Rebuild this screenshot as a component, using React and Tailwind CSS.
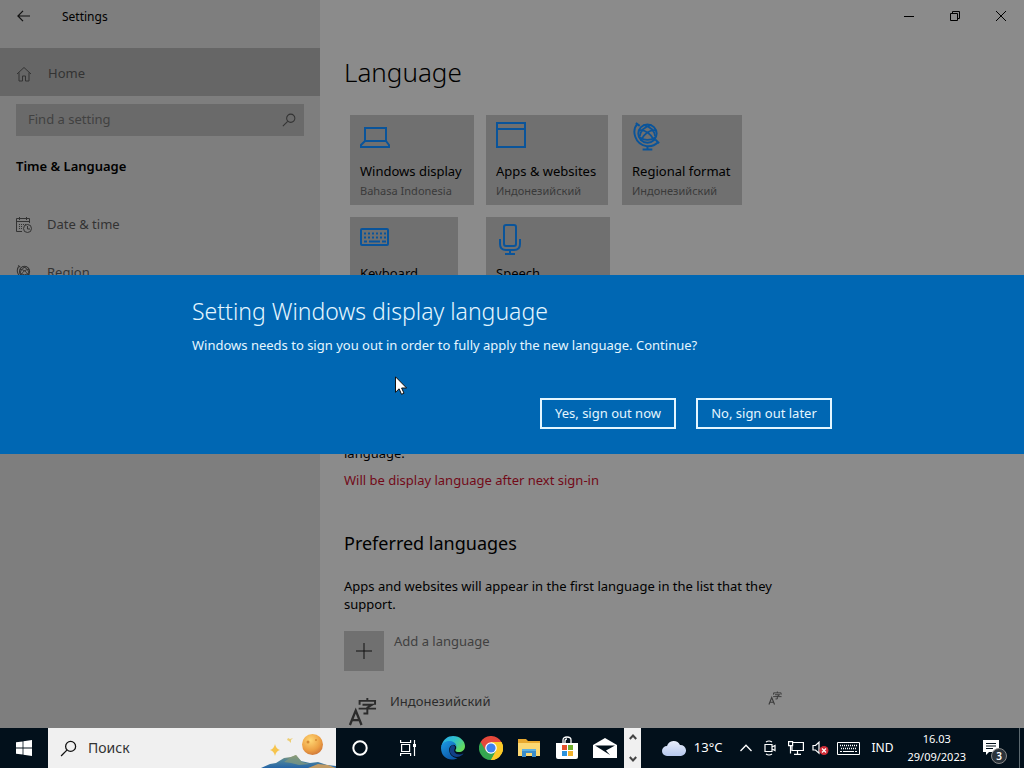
import { useState } from 'react';

const LaptopIcon = () => (
  <svg width="32" height="30" viewBox="0 0 32 30" fill="none" stroke="#0a549a" strokeWidth="2">
    <path d="M5 6h21v13H5z" />
    <path d="M5 19l-4 4v2h28v-2l-3-4z" />
  </svg>
);

const WindowIcon = () => (
  <svg width="32" height="30" viewBox="0 0 32 30" fill="none" stroke="#0a549a" strokeWidth="2">
    <path d="M1 1h28v24H1zM1 7h28" />
  </svg>
);

const GlobeIcon = ({ size = 29, color = '#0a549a', weight = 2 }) => (
  <svg width={size} height={size} viewBox="0 0 30 30" fill="none" stroke={color} strokeWidth={weight}>
    <circle cx="16" cy="12" r="9.5" />
    <path d="M7.500 8.500Q17 8 23 19M24.500 8.500Q15 8 9 19M12 3q11 3 12 12M20 3Q9 6 8 15M8 16q8 5 16 0" strokeWidth={weight * 0.9} />
    <path d="M6 1.500C-1 9 3 23 15 25c5 .6 9-1 12-4M4 1l4 3M24 18l4 4M16 25v3M11 28.500h10" />
  </svg>
);

const KeyboardIcon = () => (
  <svg width="32" height="30" viewBox="0 0 32 30" fill="none" stroke="#0a549a" strokeWidth="2">
    <rect x="1" y="5" width="27" height="16" rx="1" />
    <path d="M4 9.500h22M4 13.500h22" strokeDasharray="2 2" />
    <path d="M4 17.500h3M9 17.500h11M22 17.500h4" />
  </svg>
);

const MicIcon = () => (
  <svg width="32" height="32" viewBox="0 0 32 32" fill="none" stroke="#0a549a" strokeWidth="2">
    <rect x="8" y="1" width="12" height="21" rx="2" />
    <path d="M4 15v5q0 6 6 6h8q6 0 6-6v-5M14 26v4M9 30h10" />
  </svg>
);

const CalendarIcon = () => (
  <svg width="16" height="16" viewBox="0 0 16 16" fill="none" stroke="#333" strokeWidth="1">
    <path d="M6 14.500H.5v-13h13V6M.5 4.500h13M3.500 0v3M10.500 0v3" />
    <path d="M3 7.500h7M3 9.500h4M3 11.500h3" strokeDasharray="1 1" />
    <circle cx="11.500" cy="11.500" r="4" />
    <path d="M11.500 9v3H14" />
  </svg>
);

const HomeIcon = () => (
  <svg width="16" height="16" viewBox="0 0 16 16" fill="none" stroke="#333" strokeWidth="1">
    <path d="M1 8l7-6.500L15 8M3 6.500V15h3.500v-5h3v5H13V6.500" />
  </svg>
);

const SearchIcon = ({ size = 16, color = '#333' }) => (
  <svg width={size} height={size} viewBox="0 0 16 16" fill="none" stroke={color} strokeWidth="1.200">
    <circle cx="10" cy="6" r="4.700" />
    <path d="M6.500 9.500L1 15" />
  </svg>
);

const LanguageGlyph = ({ size, color = '#2b2b2b' }) => (
  <svg width={size} height={size} viewBox="0 0 28 30" fill="none" stroke={color} strokeWidth="2.400">
    <path d="M1 29L7 14l6 15M3 24h8" />
    <path d="M19 1v3M11 8V4h16v4M14 8h10l-5 3v6h-4M10 12h18" strokeWidth="2" />
  </svg>
);

const EdgeIcon = () => (
  <svg width="24" height="24" viewBox="0 0 24 24">
    <defs>
      <linearGradient id="edgeTop" x1="0" y1="0" x2="1" y2="0.600">
        <stop offset="0" stopColor="#28a9e8" />
        <stop offset="0.500" stopColor="#2fc0cf" />
        <stop offset="1" stopColor="#65dc5c" />
      </linearGradient>
      <linearGradient id="edgeBody" x1="0" y1="0" x2="0.600" y2="1">
        <stop offset="0" stopColor="#1c9be5" />
        <stop offset="1" stopColor="#0c58a8" />
      </linearGradient>
    </defs>
    <path d="M.5 10C2 3 7 0 12 0c7 0 12 5 12 10 0 4-3 6-6 6-4 0-4-1.500-3-3 1-2-.5-5-4-5-5 0-9 1-10.500 2z" fill="url(#edgeTop)" />
    <path d="M.2 10C1.500 6.500 5 5 8.500 5c4 0 7 2.500 7 6-1-2-2.500-2.500-4-2-3 1-4 4-3 7 1 4 5 6 8 6-7 4-16.500 0-16.500-10z" fill="url(#edgeBody)" />
    <path d="M11.500 9c-6 4-2 14 7 11.500 2-.6 3.500-2 4-3.200-3 2-7.500 1.500-9-1.300-1-2 .5-3 .5-4.500 0-1.500-1-2.500-2.500-2.500z" fill="#123f86" />
  </svg>
);

const ChromeIcon = () => (
  <svg width="24" height="24" viewBox="0 0 24 24">
    <path d="M12 12L1.600 6A12 12 0 0 1 22.400 6z" fill="#e5483b" />
    <path d="M12 12L22.400 6A12 12 0 0 1 12 24z" fill="#fbc928" />
    <path d="M12 12v12A12 12 0 0 1 1.600 6z" fill="#35a650" />
    <path d="M12 6h10.400L17 15z" fill="#fbc928" />
    <path d="M1.600 6L7 15l5-9z" fill="#e5483b" />
    <path d="M7 15l5 9 5-9z" fill="#35a650" />
    <path d="M17 15l-5 9A12 12 0 0 0 22.400 6H12z" fill="#fbc928" />
    <circle cx="12" cy="12" r="5.800" fill="#fff" />
    <circle cx="12" cy="12" r="4.600" fill="#3f82ee" />
  </svg>
);

const FolderIcon = () => (
  <svg width="22" height="20" viewBox="0 0 22 20">
    <path d="M0 1h8l2 2h12v15H0z" fill="#e8a92f" />
    <path d="M0 5h22v13H0z" fill="#fbd873" />
    <path d="M4 11h14v8h-4v-4H8v4H4z" fill="#3b8dc9" />
    <path d="M4 11h14v2H4z" fill="#5cb0e2" />
  </svg>
);

const StoreIcon = () => (
  <svg width="24" height="24" viewBox="0 0 24 24">
    <path d="M8 8V4q0-3 4-3t4 3v4M10 8V5q0-2 2-2" fill="none" stroke="#fff" strokeWidth="1.300" />
    <path d="M1 7h22v14q0 2-2 2H3q-2 0-2-2z" fill="#fff" />
    <path d="M7 9h5v5H7z" fill="#e2502b" />
    <path d="M13 9h5v5h-5z" fill="#6fae2b" />
    <path d="M7 15h5v5H7z" fill="#2b92dd" />
    <path d="M13 15h5v5h-5z" fill="#f2b22c" />
  </svg>
);

const MailIcon = () => (
  <svg width="24" height="20" viewBox="0 0 24 20">
    <path d="M0 7l12-7 12 7v13H0z" fill="#fff" />
    <path d="M2 7.500h20l-9 5 4 4.500z" fill="#02101b" />
  </svg>
);

const PINNED = [
  { name: 'Edge', Icon: EdgeIcon },
  { name: 'Chrome', Icon: ChromeIcon },
  { name: 'File Explorer', Icon: FolderIcon },
  { name: 'Store', Icon: StoreIcon },
  { name: 'Mail', Icon: MailIcon },
];

const TILES = [
  { name: 'Windows display', value: 'Bahasa Indonesia', Icon: LaptopIcon, width: 'w-31' },
  { name: 'Apps & websites', value: 'Индонезийский', Icon: WindowIcon, width: 'w-[122px]' },
  { name: 'Regional format', value: 'Индонезийский', Icon: GlobeIcon, width: 'w-30' },
  { name: 'Keyboard', value: '', Icon: KeyboardIcon, width: 'w-27' },
  { name: 'Speech', value: '', Icon: MicIcon, width: 'w-31' },
];

function Sidebar() {
  const [query, setQuery] = useState('');

  return (
    <aside className="flex w-80 shrink-0 flex-col bg-[#7e7e7e]">
      <div className="flex h-12 items-start">
        <button type="button" aria-label="Back" className="flex h-8 w-12 items-center justify-center">
          <svg width="14" height="12" viewBox="0 0 14 12" fill="none" stroke="#111" strokeWidth="1.200">
            <path d="M13 6H1M6 .8L.9 6 6 11.200" />
          </svg>
        </button>
        <span className="px-3.5 text-xs leading-[34px] text-black">Settings</span>
      </div>
      <a href="#home" className="flex h-12 items-center gap-4 bg-[#666] px-4 pt-1 text-[13px] text-[#333]">
        <HomeIcon />Home
      </a>
      <div className="mx-4 mt-2 flex h-8 items-center bg-[#6a6a6a] pr-2 pl-3">
        <input
          type="text"
          aria-label="Find a setting"
          placeholder="Find a setting"
          value={query}
          onChange={(e) => setQuery(e.target.value)}
          className="min-w-0 flex-1 text-[13px] text-black outline-none placeholder:text-[#414141]"
        />
        <SearchIcon size={14} />
      </div>
      <h2 className="px-4 pt-5 text-[13px] leading-5 font-semibold text-black">Time &amp; Language</h2>
      <nav className="mt-[25px] flex flex-col text-[13px] text-[#333]">
        <a href="#date" className="flex h-12 items-center gap-[15px] px-4"><CalendarIcon />Date &amp; time</a>
        <a href="#region" className="flex h-12 items-center gap-[15px] px-4">
          <GlobeIcon size={16} color="#333" />Region
        </a>
      </nav>
    </aside>
  );
}

function WindowControls() {
  return (
    <div className="flex h-8 justify-end text-black">
      <button type="button" aria-label="Minimize" className="flex w-[46px] items-center justify-center">
        <svg width="10" height="10" viewBox="0 0 10 10" stroke="#000"><path d="M0 5.500h10" /></svg>
      </button>
      <button type="button" aria-label="Restore" className="flex w-[46px] items-center justify-center">
        <svg width="10" height="10" viewBox="0 0 10 10" fill="none" stroke="#000"><path d="M.5 2.500h7v7h-7zM2.500 2.500v-2h7v7h-2" /></svg>
      </button>
      <button type="button" aria-label="Close" className="flex w-[46px] items-center justify-center">
        <svg width="10" height="10" viewBox="0 0 10 10" stroke="#000"><path d="M0 0l10 10M10 0L0 10" /></svg>
      </button>
    </div>
  );
}

function LanguagePage() {
  return (
    <main className="min-w-0 flex-1 bg-[#8b8b8b] text-black">
      <WindowControls />
      <div className="px-6">
        <h1 className="pt-5 text-[26px] leading-10 font-light">Language</h1>
        <div className="mt-[23px] ml-1.5 grid grid-cols-[repeat(3,136px)] gap-y-3">
          {TILES.map(({ name, value, Icon, width }) => (
            <button key={name} type="button" className={`flex h-[90px] flex-col items-start bg-[#707070] px-2.5 pt-[7px] text-left whitespace-nowrap ${width}`}>
              <span className="flex h-[39px] items-start">
                <Icon />
              </span>
              <span className="text-[13px] leading-5">{name}</span>
              <span className="text-[11px] leading-5 text-[#3a3a3a]">{value}</span>
            </button>
          ))}
        </div>

        <p className="mt-[119px] max-w-[440px] text-[13px] leading-[18px]">
          Windows features like Settings and File Explorer will appear in this language.
        </p>
        <p className="mt-2 text-[13px] leading-5 text-[#720a18]">Will be display language after next sign-in</p>

        <h2 className="mt-[39px] text-lg leading-7">Preferred languages</h2>
        <p className="mt-5 max-w-[440px] text-[13px] leading-[18px]">
          Apps and websites will appear in the first language in the list that they support.
        </p>
        <button type="button" className="mt-[18px] flex items-start gap-2.5 text-[13px] leading-5 text-[#404040]">
          <span className="flex size-10 items-center justify-center bg-[#707070]">
            <svg width="16" height="16" viewBox="0 0 16 16" stroke="#111"><path d="M8 0v16M0 8h16" /></svg>
          </span>
          Add a language
        </button>
        <div className="mt-5 flex max-w-[438px] items-start text-[13px] leading-5 text-[#2b2b2b]">
          <span className="w-[46px] pt-1.5 pl-1"><LanguageGlyph size={29} /></span>
          <span className="flex-1">Индонезийский</span>
          <LanguageGlyph size={14} color="#3a3a3a" />
        </div>
      </div>
    </main>
  );
}

function SignOutDialog() {
  return (
    <div className="absolute inset-0 flex items-center">
      <section role="dialog" aria-labelledby="dialog-title" className="w-full bg-[#0067b3] text-[#e4f6ff]">
        <div className="mx-auto max-w-[640px] pt-5 pb-[25px]">
          <h2 id="dialog-title" className="text-[23px] leading-8 font-light">Setting Windows display language</h2>
          <p className="mt-2 text-[13px] leading-5">
            Windows needs to sign you out in order to fully apply the new language. Continue?
          </p>
          <div className="mt-[43px] flex justify-end gap-5 text-[13px]">
            <button type="button" className="h-[31px] w-34 border-2 border-[#e4f6ff] pt-0.5">Yes, sign out now</button>
            <button type="button" className="h-[31px] w-34 border-2 border-[#e4f6ff] pt-0.5">No, sign out later</button>
          </div>
        </div>
      </section>
    </div>
  );
}

function SearchArt() {
  return (
    <svg width="76" height="40" viewBox="0 0 76 40" className="self-end">
      <defs>
        <radialGradient id="moon" cx="0.400" cy="0.300" r="0.800">
          <stop offset="0" stopColor="#ffd875" />
          <stop offset="0.600" stopColor="#eda044" />
          <stop offset="1" stopColor="#c66b35" />
        </radialGradient>
        <linearGradient id="hills" x1="0" y1="0" x2="0" y2="1">
          <stop offset="0" stopColor="#9b9d69" />
          <stop offset="0.400" stopColor="#4f859b" />
          <stop offset="1" stopColor="#2464a7" />
        </linearGradient>
      </defs>
      <path d="M15 16q1 5 5 6-4 1-5 6-1-5-5-6 4-1 5-6z" fill="#f6c44d" />
      <path d="M28 10l2 1 3-1-2 2v3l-2-2-2-1z" fill="#edcd73" />
      <circle cx="52.500" cy="16.500" r="10.500" fill="url(#moon)" />
      <circle cx="48" cy="14" r="1.500" fill="#d78b35" />
      <circle cx="56" cy="12" r="1" fill="#d78b35" />
      <path d="M1 40l9-4 6-1 8-5 7-1 5-2 5 6 9 2 8-1 9 3 9 1v2z" fill="url(#hills)" />
      <path d="M24 34l7-5 5-2 6 7 8 2-11 1-8-2z" fill="#879b79" opacity="0.700" />
      <path d="M48 40l10-4 10 1 8 3z" fill="#c19b65" />
    </svg>
  );
}

function Taskbar() {
  const [search, setSearch] = useState('');

  return (
    <footer className="flex h-10 shrink-0 items-stretch bg-[#02101b] text-white">
      <button type="button" aria-label="Start" className="flex w-12 items-center justify-center">
        <svg width="16" height="16" viewBox="0 0 16 16" fill="#fff">
          <path d="M0 2.300l6.600-.9v6.200H0zM7.400 1.300L16 0v7.600H7.400zM0 8.400h6.600v6.200L0 13.700zM7.400 8.400H16V16l-8.600-1.300z" />
        </svg>
      </button>
      <div className="flex w-72 items-center bg-[#f0f0f0] pl-3">
        <SearchIcon size={17} color="#111" />
        <input
          type="text"
          aria-label="Поиск"
          placeholder="Поиск"
          value={search}
          onChange={(e) => setSearch(e.target.value)}
          className="min-w-0 flex-1 pl-[11px] text-sm text-black outline-none placeholder:text-[#333]"
        />
        <SearchArt />
      </div>
      <button type="button" aria-label="Cortana" className="flex w-12 items-center justify-center">
        <svg width="16" height="16" viewBox="0 0 16 16" fill="none" stroke="#fff" strokeWidth="2"><circle cx="8" cy="8" r="6.700" /></svg>
      </button>
      <button type="button" aria-label="Task view" className="flex w-12 items-center justify-center">
        <svg width="16" height="16" viewBox="0 0 16 16" fill="none" stroke="#fff" strokeWidth="1.200">
          <path d="M.6 0v2.500h10V0M.6 16v-2.500h10V16M1.600 4.500h8v7h-8zM14.500 0v16" />
          <path d="M13 4h3v3h-3z" fill="#fff" stroke="none" />
        </svg>
      </button>
      <div className="flex pl-0.5">
        {PINNED.map(({ name, Icon }) => (
          <button key={name} type="button" aria-label={name} className="flex w-[38px] items-center justify-center">
            <Icon />
          </button>
        ))}
      </div>
      <div className="flex w-[17px] flex-col items-center justify-between bg-[#f0f0f0] py-1.5">
        <button type="button" aria-label="Scroll up">
          <svg width="8" height="6" viewBox="0 0 8 6" className="block" fill="none" stroke="#444" strokeWidth="2"><path d="M.8 5L4 1.500 7.200 5" /></svg>
        </button>
        <button type="button" aria-label="Scroll down">
          <svg width="8" height="6" viewBox="0 0 8 6" className="block" fill="none" stroke="#444" strokeWidth="2"><path d="M.8 1L4 4.500 7.200 1" /></svg>
        </button>
      </div>

      <div className="ml-auto flex items-center">
        <button type="button" className="flex items-center gap-2 pr-[17px] text-[13px]">
          <svg width="24" height="16" viewBox="0 0 24 16">
            <defs>
              <linearGradient id="cloud" x1="0" y1="0" x2="0" y2="1">
                <stop offset="0" stopColor="#e7edfb" />
                <stop offset="1" stopColor="#b6c8ee" />
              </linearGradient>
            </defs>
            <path d="M5 16a5 5 0 0 1 0-10 7 7 0 0 1 13-1 5.500 5.500 0 0 1 1 11z" fill="url(#cloud)" />
          </svg>
          13°C
        </button>
        <div className="flex items-center gap-3">
          <svg width="12" height="8" viewBox="0 0 12 8" fill="none" stroke="#fff" strokeWidth="1.300"><path d="M.5 7L6 1.200 11.500 7" /></svg>
          <svg width="12" height="16" viewBox="0 0 12 16" fill="none" stroke="#fff" strokeWidth="1.200">
            <path d="M1 4.500h7v7H1zM8 7l3-1.500v5L8 9M2 2q3-2 6 0M2 14q3 2 6 0" />
          </svg>
          <div className="flex items-center gap-2">
            <svg width="16" height="14" viewBox="0 0 16 14" fill="none" stroke="#fff" strokeWidth="1.200">
              <path d="M5 1.500h10.400v8H4V5M9.500 9.500v4M6 13.400h7M.6.6h4v4h-4zM2.500 4.500v8" />
            </svg>
            <svg width="17" height="14" viewBox="0 0 17 14" fill="none" stroke="#fff" strokeWidth="1.200">
              <path d="M1 4.500h2.500L7 1.200v11L3.500 9H1z" />
              <circle cx="12" cy="9.500" r="4.500" fill="#d02d38" stroke="none" />
              <path d="M10 7.500l4 4M14 7.500l-4 4" />
            </svg>
            <svg width="23" height="13" viewBox="0 0 23 13" fill="none" stroke="#fff">
              <path d="M.5.5h22v12H.5z" />
              <path d="M3 3.500h17M4 6.500h16" strokeDasharray="1 1" strokeWidth="1.300" />
              <path d="M3 9.500h2M6 9.500h11M18 9.500h2" />
            </svg>
          </div>
          <span className="text-xs">IND</span>
        </div>
        <time dateTime="2023-09-29T16:03" className="ml-3.5 text-center text-[11px] leading-[18px]">
          16.03<br />29/09/2023
        </time>
        <button type="button" aria-label="3 notifications" className="relative mr-2 ml-[17px] flex h-10 w-7 items-center">
          <svg width="18" height="18" viewBox="0 0 18 18">
            <path d="M0 1h16v12H6l-3 3v-3H0z" fill="#fff" />
            <path d="M3 4.500h10M3 7h10M3 9.500h7" stroke="#02101b" />
          </svg>
          <span className="absolute right-1 bottom-1 flex size-4 items-center justify-center rounded-full border border-[#888] bg-[#2b333b] text-[10px] font-semibold">3</span>
        </button>
        <span className="mr-1 h-10 w-px bg-[#5c6970]" />
      </div>
    </footer>
  );
}

export default function App() {
  return (
    <div className="relative flex h-screen flex-col overflow-hidden font-['Noto_Sans','Open_Sans',sans-serif]">
      <div className="relative flex min-h-0 flex-1 overflow-hidden">
        <Sidebar />
        <LanguagePage />
        <SignOutDialog />
      </div>
      <Taskbar />
      <svg width="12" height="19" viewBox="0 0 12 19" className="pointer-events-none absolute top-[376px] left-[395px]">
        <path d="M.5.8v15.500l3.600-3.500 2.400 5.500 2.500-1.100L6.600 12h5z" fill="#fff" stroke="#111" />
      </svg>
    </div>
  );
}
